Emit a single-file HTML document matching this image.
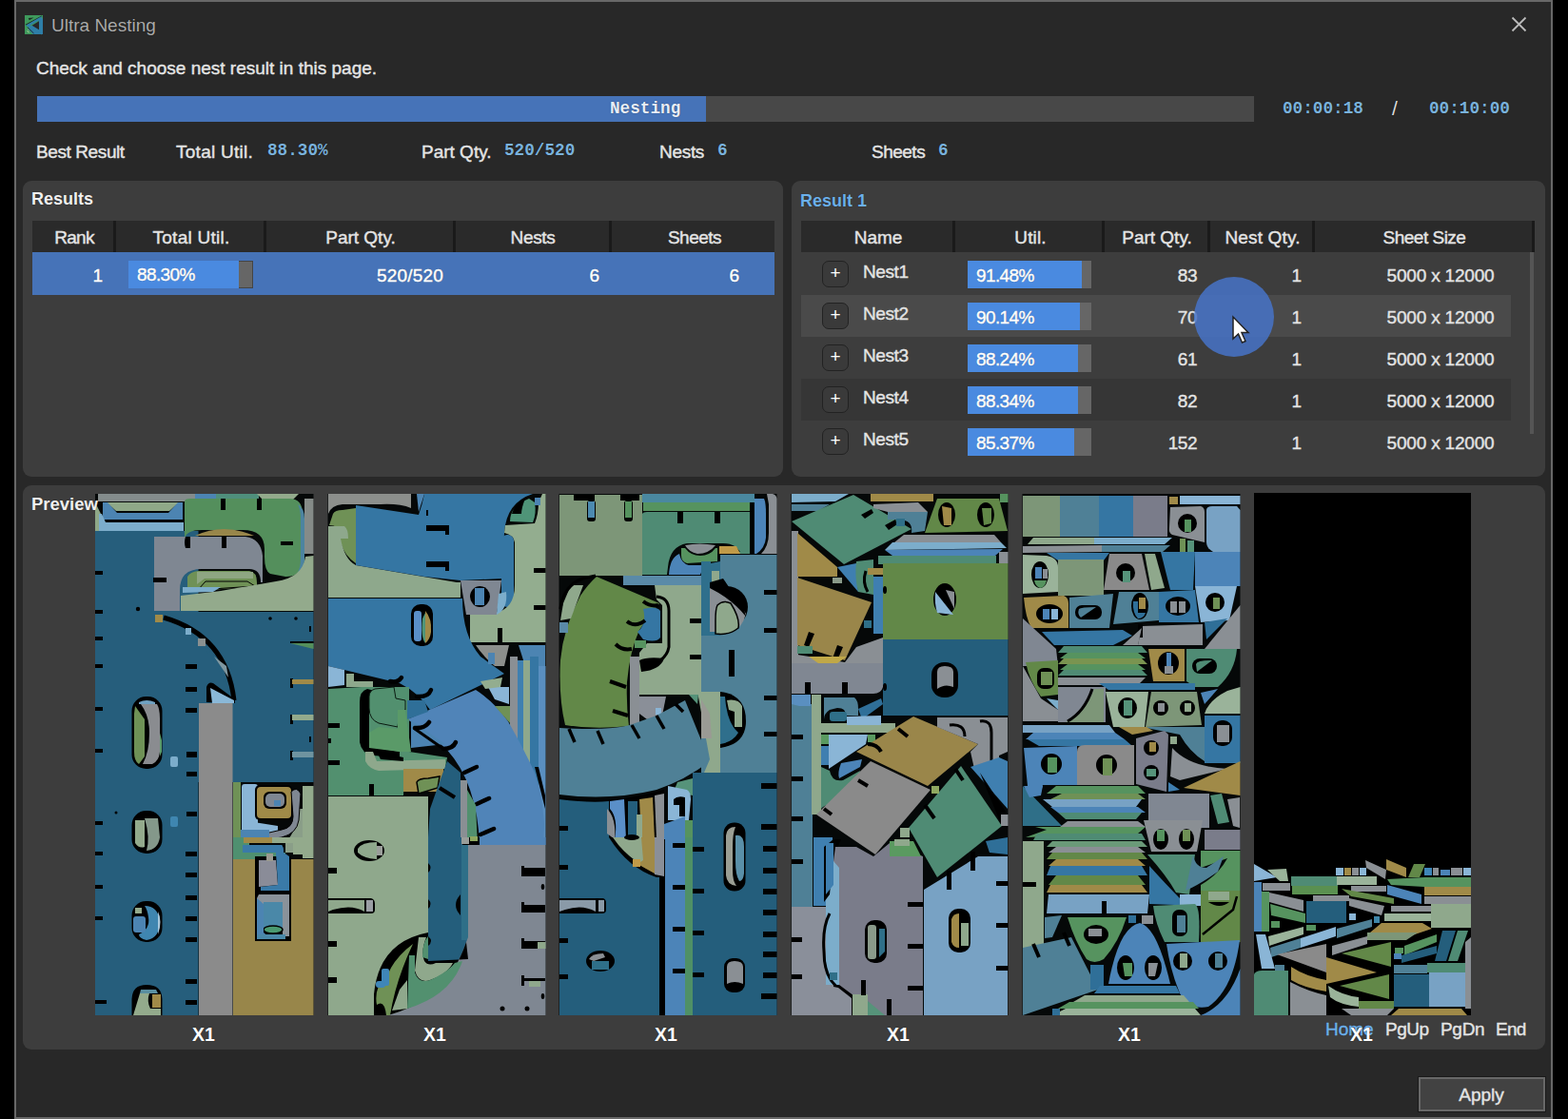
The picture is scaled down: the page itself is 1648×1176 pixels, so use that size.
<!DOCTYPE html>
<html lang="en">
<head>
<meta charset="utf-8">
<title>Ultra Nesting</title>
<style>
*{box-sizing:border-box;margin:0;padding:0}
html,body{width:1648px;height:1176px;overflow:hidden;background:#000}
body{font-family:"Liberation Sans",sans-serif;color:#e6e6e6;font-size:18px;position:relative}
.abs{position:absolute}
#win{position:absolute;left:15px;top:0;width:1617px;height:1176px;background:#282828;border:2.300px solid #686868}
.t{position:absolute;white-space:nowrap;line-height:1;text-shadow:0 0 1px rgba(0,0,0,.6)}
.lbl{color:#e4e4e4;font-size:19px;-webkit-text-stroke:.45px currentColor}
.mono{font-family:"Liberation Mono",monospace;color:#7ab2dc;font-size:17.700px;font-weight:bold}
.panel{position:absolute;background:#3d3d3d;border-radius:9px}
.hdr{position:absolute;background:#2a2a2a}
.hdr .sep{position:absolute;top:0;width:3px;height:100%;background:#1a1a1a}
.c{transform:translateX(-50%)}
.r{transform:translateX(-100%)}
.b{font-weight:bold}
.row{position:absolute;left:842px;width:746px;height:44px}
.plus{position:absolute;left:864px;width:28px;height:28px;border:1.5px solid #222;border-radius:7px;background:#3a3a3a;color:#fff;font-size:19px;line-height:24px;text-align:center}
.bar{position:absolute;left:1017px;height:29px;background:#4a8ae0}
.barbg{position:absolute;left:1017px;width:130px;height:29px;background:#666}
</style>
</head>
<body>
<div id="win"></div>

<!-- title bar -->
<svg class="abs" style="left:26px;top:16px" width="19" height="20.500" viewBox="0 0 20 21" preserveAspectRatio="none">
  <rect x="0" y="0" width="20" height="20.500" fill="#3f9a5c"/>
  <polygon points="20,0 20,20.500 9,20.500 3,14 14,8" fill="#2e7fa8"/>
  <polygon points="16,0 20,0 20,3 4,11.500 0,11.500 0,9.500" fill="#3f9a5c"/>
  <path d="M19,1 L1,10.500" stroke="#1d2a22" stroke-width="1.300" fill="none"/>
  <path d="M4,3 L10,2.500 L5,5.500Z" fill="#1d2a22"/>
  <path d="M17.500,3 L3.500,11 L17.500,19 Z" fill="none" stroke="#2e7fa8" stroke-width="2.400" stroke-linejoin="miter"/>
  <polygon points="15.800,6.500 8,11 15.800,15.500" fill="#282828"/>
  <path d="M3,13 L10,19.500" stroke="#1d2a22" stroke-width="1" fill="none"/>
  <polygon points="0,12.500 0,20.500 8.500,20.500" fill="#3f9a5c"/>
  <path d="M2.500,17 L5,18.500 M3.500,15 L4.500,16" stroke="#cfe0b0" stroke-width=".8"/>
</svg>
<div class="t" style="left:54px;top:17px;font-size:19px;color:#aaa">Ultra Nesting</div>
<svg class="abs" style="left:1588px;top:17px" width="17" height="17" viewBox="0 0 17 17"><path d="M1.5 1.5 L15.5 15.5 M15.5 1.5 L1.5 15.5" stroke="#bbb" stroke-width="1.8" fill="none"/></svg>

<div class="t lbl" style="left:38px;top:62px">Check and choose nest result in this page.</div>

<!-- progress -->
<div class="abs" style="left:39px;top:101px;width:1279px;height:27px;background:#484848"></div>
<div class="abs" style="left:39px;top:101px;width:703px;height:27px;background:#4673b8"></div>
<div class="t mono" style="left:641px;top:106px;color:#e8eef8">Nesting</div>
<div class="t mono" style="left:1348px;top:106px">00:00:18</div>
<div class="t" style="left:1463px;top:103px;color:#ddd;font-size:21px">/</div>
<div class="t mono" style="left:1502px;top:106px">00:10:00</div>

<!-- best result row -->
<div class="t lbl" style="left:38px;top:150px;letter-spacing:-0.4px">Best Result</div>
<div class="t lbl" style="left:185px;top:150px;letter-spacing:0.26px">Total Util.</div>
<div class="t mono" style="left:281px;top:150px">88.30%</div>
<div class="t lbl" style="left:443px;top:150px">Part Qty.</div>
<div class="t mono" style="left:530px;top:150px">520/520</div>
<div class="t lbl" style="left:693px;top:150px;letter-spacing:-0.3px">Nests</div>
<div class="t mono" style="left:754px;top:150px">6</div>
<div class="t lbl" style="left:916px;top:150px;letter-spacing:-0.5px">Sheets</div>
<div class="t mono" style="left:986px;top:150px">6</div>

<!-- results panel -->
<div class="panel" style="left:24px;top:190px;width:799px;height:311px"></div>
<div class="t b" style="left:33px;top:200px;font-size:18px;color:#f0f0f0">Results</div>
<div class="hdr" style="left:34px;top:232px;width:780px;height:33px">
  <div class="sep" style="left:85px"></div><div class="sep" style="left:243px"></div><div class="sep" style="left:442px"></div><div class="sep" style="left:606px"></div>
</div>
<div class="t lbl c" style="left:78px;top:240px;letter-spacing:-0.7px">Rank</div>
<div class="t lbl c" style="left:201px;top:240px;letter-spacing:0.26px">Total Util.</div>
<div class="t lbl c" style="left:379px;top:240px">Part Qty.</div>
<div class="t lbl c" style="left:560px;top:240px;letter-spacing:-0.3px">Nests</div>
<div class="t lbl c" style="left:730px;top:240px;letter-spacing:-0.5px">Sheets</div>
<div class="abs" style="left:34px;top:265px;width:780px;height:45px;background:#4673b8"></div>
<div class="abs" style="left:135px;top:274px;width:131px;height:29px;background:#666;border:1px solid #444"></div>
<div class="abs" style="left:135px;top:274px;width:116px;height:29px;background:#4a8ae0"></div>
<div class="t lbl r" style="left:108px;top:280px;color:#fff">1</div>
<div class="t lbl" style="left:144px;top:279px;color:#fff;letter-spacing:-0.6px">88.30%</div>
<div class="t lbl r" style="left:466px;top:280px;color:#fff;letter-spacing:0.2px">520/520</div>
<div class="t lbl r" style="left:630px;top:280px;color:#fff">6</div>
<div class="t lbl r" style="left:777px;top:280px;color:#fff">6</div>

<!-- result 1 panel -->
<div class="panel" style="left:832px;top:190px;width:792px;height:311px"></div>
<div class="t b" style="left:841px;top:202px;font-size:18px;color:#6cb0ea">Result 1</div>
<div class="hdr" style="left:842px;top:232px;width:771px;height:33px">
  <div class="sep" style="left:159px"></div><div class="sep" style="left:316px"></div><div class="sep" style="left:427px"></div><div class="sep" style="left:537px"></div><div class="sep" style="left:768px"></div>
</div>
<div class="t lbl c" style="left:923px;top:240px">Name</div>
<div class="t lbl c" style="left:1083px;top:240px;letter-spacing:0.15px">Util.</div>
<div class="t lbl c" style="left:1216px;top:240px">Part Qty.</div>
<div class="t lbl c" style="left:1327px;top:240px;letter-spacing:0.15px">Nest Qty.</div>
<div class="t lbl c" style="left:1497px;top:240px;letter-spacing:-0.5px">Sheet Size</div>
<div id="rows">
<div class="plus" style="top:274px">+</div>
<div class="t lbl" style="left:907px;top:276px;letter-spacing:-0.4px">Nest1</div>
<div class="barbg" style="top:274px"></div><div class="bar" style="top:274px;width:120px"></div>
<div class="t lbl" style="left:1026px;top:280px;color:#fff;letter-spacing:-0.6px">91.48%</div>
<div class="t lbl r" style="left:1258px;top:280px;letter-spacing:-0.5px">83</div>
<div class="t lbl r" style="left:1368px;top:280px">1</div>
<div class="t lbl c" style="left:1514px;top:280px;letter-spacing:-0.2px">5000 x 12000</div>
<div class="row" style="top:309.500px;background:#4a4a4a"></div>
<div class="plus" style="top:318px">+</div>
<div class="t lbl" style="left:907px;top:320px;letter-spacing:-0.4px">Nest2</div>
<div class="barbg" style="top:318px"></div><div class="bar" style="top:318px;width:118px"></div>
<div class="t lbl" style="left:1026px;top:324px;color:#fff;letter-spacing:-0.6px">90.14%</div>
<div class="t lbl r" style="left:1258px;top:324px;letter-spacing:-0.5px">70</div>
<div class="t lbl r" style="left:1368px;top:324px">1</div>
<div class="t lbl c" style="left:1514px;top:324px;letter-spacing:-0.2px">5000 x 12000</div>
<div class="plus" style="top:362px">+</div>
<div class="t lbl" style="left:907px;top:364px;letter-spacing:-0.4px">Nest3</div>
<div class="barbg" style="top:362px"></div><div class="bar" style="top:362px;width:116px"></div>
<div class="t lbl" style="left:1026px;top:368px;color:#fff;letter-spacing:-0.6px">88.24%</div>
<div class="t lbl r" style="left:1258px;top:368px;letter-spacing:-0.5px">61</div>
<div class="t lbl r" style="left:1368px;top:368px">1</div>
<div class="t lbl c" style="left:1514px;top:368px;letter-spacing:-0.2px">5000 x 12000</div>
<div class="row" style="top:397.500px;background:#363636"></div>
<div class="plus" style="top:406px">+</div>
<div class="t lbl" style="left:907px;top:408px;letter-spacing:-0.4px">Nest4</div>
<div class="barbg" style="top:406px"></div><div class="bar" style="top:406px;width:116px"></div>
<div class="t lbl" style="left:1026px;top:412px;color:#fff;letter-spacing:-0.6px">88.34%</div>
<div class="t lbl r" style="left:1258px;top:412px;letter-spacing:-0.5px">82</div>
<div class="t lbl r" style="left:1368px;top:412px">1</div>
<div class="t lbl c" style="left:1514px;top:412px;letter-spacing:-0.2px">5000 x 12000</div>
<div class="plus" style="top:450px">+</div>
<div class="t lbl" style="left:907px;top:452px;letter-spacing:-0.4px">Nest5</div>
<div class="barbg" style="top:450px"></div><div class="bar" style="top:450px;width:112px"></div>
<div class="t lbl" style="left:1026px;top:456px;color:#fff;letter-spacing:-0.6px">85.37%</div>
<div class="t lbl r" style="left:1258px;top:456px;letter-spacing:-0.5px">152</div>
<div class="t lbl r" style="left:1368px;top:456px">1</div>
<div class="t lbl c" style="left:1514px;top:456px;letter-spacing:-0.2px">5000 x 12000</div>
<div class="abs" style="left:1608px;top:265px;width:4px;height:191px;background:#555"></div>
<div class="abs" style="left:1255px;top:291px;width:84px;height:84px;border-radius:50%;background:rgba(70,115,200,.85)"></div>
<svg class="abs" style="left:1294px;top:331px" width="22" height="32" viewBox="0 0 22 32"><path d="M2 2 L2 25 L7.5 20 L11.5 29 L15 27.5 L11 18.5 L18 18.5 Z" fill="#fff" stroke="#222" stroke-width="1.5"/></svg>
</div>

<!-- preview panel -->
<div class="panel" style="left:24px;top:509.500px;width:1600px;height:593px"></div>
<svg class="abs" style="left:0;top:0" width="1648" height="1176" viewBox="0 0 1648 1176" shape-rendering="geometricPrecision">
<!--S1-->
<g id="s1">
<rect x="100" y="519" width="229.500" height="548" fill="#050808"/>
<rect x="100" y="558" width="108.500" height="509" fill="#265e7c"/>
<rect x="161" y="643" width="168.500" height="179" fill="#265e7c"/>
<!-- top-left stacked bands -->
<rect x="103" y="519" width="113" height="8" fill="#848c8c"/>
<polygon points="100,528 106,540 106,558 100,558" fill="#8fa888"/>
<polygon points="112,528 188,528 178,537 122,537" fill="#8fa888"/>
<polygon points="108,528 113,528 123,539 177,539 187,528 192,528 192,546 108,546" fill="#4c84b2"/>
<polygon points="104,540 107,540 111,549 193,549 193,558 104,558" fill="#7cadcb"/>
<!-- top strip above green -->
<rect x="205" y="519" width="22" height="5" fill="#4c84b2"/>
<rect x="227" y="519" width="45" height="5" fill="#4f8f7c"/>
<polygon points="270,519 314,519 308,525 276,525" fill="#93aa8c"/>
<!-- green arch -->
<path d="M194,527 Q194,524 200,524 L304,524 Q318,524 318,540 L318,590 Q318,606 300,606 L284,603 Q278,600 278,585 L278,577 Q278,557 255,557 L212,557 Q196,557 194,566 Z" fill="#548f5c"/>
<path d="M313,530 Q320,534 320,545 L320,590 Q319,600 312,604 Q316,596 316,588 L316,545 Q316,536 313,530Z" fill="#4c84a0"/>
<rect x="232" y="524" width="5" height="12" fill="#000"/><rect x="270" y="524" width="5" height="12" fill="#000"/><rect x="295" y="569" width="13" height="4" fill="#000"/>
<rect x="320" y="524" width="9.500" height="58" fill="#858b88"/>
<!-- gold arc + grey-blue arch -->
<path d="M205,563 Q235,549 267,563 Z" fill="#98864a"/>
<path d="M162,564 L258,564 Q274,566 276,584 L276,612 L274,612 Q274,598 262,598 L212,598 Q189,598 189,620 L189,642 L162,642 Z" fill="#7f8792"/>
<path d="M195,564 L200,564 L200,576 L195,576 Q193,570 195,564Z" fill="#000"/><rect x="233" y="564" width="5" height="12" fill="#000"/><rect x="161" y="607" width="14" height="5" fill="#000"/>
<!-- inside arch -->
<path d="M197,620 L197,606 Q200,601 208,600 L262,600 Q270,601 270,612 L270,616 L197,622Z" fill="#6f9156"/>
<path d="M207,601 L266,601 L266,608 L258,608 L215,608 L207,614Z" fill="#8ea682"/>
<polygon points="208,620 216,611 260,611 268,616" fill="#6f9156" stroke="#000" stroke-width="1"/>
<polygon points="192,617 232,617 224,622 192,623" fill="#7cadcb"/>
<!-- sage big -->
<path d="M190,642 L190,626 L232,621 L290,611 Q318,607 321,585 L329.500,584 L329.500,642 Z" fill="#93aa8c"/>
<!-- arc detail -->
<rect x="163" y="646" width="8" height="8" fill="#a08a48"/>
<path d="M172,649 Q238,668 246,736" stroke="#000" stroke-width="5" fill="none"/>
<path d="M196,664 Q226,684 236,716" stroke="#265e7c" stroke-width="3" fill="none" stroke-dasharray="6 7"/>
<rect x="195" y="660" width="6" height="7" fill="#7cadcb"/><rect x="208" y="671" width="8" height="8" fill="#8a9090"/>
<polygon points="225,690 238,700 240,712" fill="#7f97a0"/>
<path d="M217,738 L217,722 Q219,716 224,718 L247,735 L247,739Z" fill="#000"/>
<polygon points="221,723 246,736 246,739 223,739" fill="#8ab8d8"/>
<!-- edge notches -->
<g fill="#000">
<rect x="100" y="600" width="8" height="4"/><rect x="100" y="641" width="8" height="4"/><rect x="100" y="669" width="8" height="4"/><rect x="100" y="698" width="8" height="4"/><rect x="100" y="743" width="8" height="4"/><rect x="100" y="787" width="8" height="4"/><rect x="100" y="863" width="8" height="4"/><rect x="100" y="895" width="8" height="4"/><rect x="100" y="930" width="8" height="4"/><rect x="100" y="963" width="8" height="4"/><rect x="100" y="1051" width="12" height="4"/>
<rect x="195" y="698" width="12" height="5"/><rect x="195" y="722" width="12" height="5"/><rect x="195" y="744" width="12" height="5"/><rect x="196" y="790" width="11" height="6"/><rect x="196" y="811" width="11" height="5"/><rect x="196" y="853" width="11" height="5"/><rect x="195" y="895" width="12" height="5"/><rect x="195" y="917" width="12" height="5"/><rect x="195" y="941" width="12" height="5"/><rect x="195" y="963" width="12" height="5"/><rect x="195" y="985" width="12" height="5"/><rect x="195" y="1029" width="12" height="5"/><rect x="195" y="1051" width="12" height="5"/>
<circle cx="145" cy="640" r="2.200"/><circle cx="284" cy="650" r="1.800"/><circle cx="311" cy="650" r="1.800"/><rect x="325" y="658" width="2" height="6"/><rect x="325" y="774" width="2" height="6"/><circle cx="122" cy="854" r="1.500"/>
</g>
<!-- slots -->
<rect x="138.500" y="732" width="32" height="76" rx="15" fill="#000"/>
<path d="M142,742 L152,756 L152,795 L146,803 Q141,800 141,790 L141,750Z" fill="#6f9156"/>
<path d="M148,740 L165,740 Q168,745 168,755 L168,790 Q167,800 160,803 L150,803 Q157,790 157,770 Q157,752 148,740Z" fill="#8a8c90"/>
<path d="M146,738 Q154,734 163,738 L163,740 L146,740Z" fill="#6fa0c0"/>
<path d="M168,770 L170,778 L170,790 L168,795Z" fill="#5a9a6a"/>
<rect x="179" y="795" width="8" height="11" rx="2" fill="#7cadcb"/>
<rect x="138.500" y="852" width="32" height="45" rx="15" fill="#000"/>
<path d="M142,862 L152,862 L152,890 Q146,892 142,886Z" fill="#93aa8c"/>
<path d="M152,860 L166,860 L168,880 Q166,893 154,894 Q158,880 152,860Z" fill="#84988a"/>
<rect x="179" y="858" width="8" height="11" rx="2" fill="#3f86b0"/>
<rect x="138.500" y="947" width="32" height="43" rx="15" fill="#000"/>
<path d="M152,952 Q166,952 168,968 Q168,986 154,988 Q146,986 146,982 Q158,976 156,964 Q155,956 152,952Z" fill="#3f86b0"/>
<path d="M166,958 Q171,968 166,982Z" fill="#a8c8dc"/>
<rect x="142" y="954" width="7" height="6" fill="#93aa8c"/><rect x="140" y="963" width="13" height="17" rx="3" fill="#4c84b2"/>
<path d="M138.500,1067 L138.500,1050 Q139,1035 154,1035 Q170,1035 170.500,1050 L170.500,1067Z" fill="#000"/>
<path d="M140,1067 L147,1044 L157,1044 Q154,1052 158,1060 L169,1060 L169,1067Z" fill="#93aa8c"/>
<path d="M148,1040 L164,1040 L166,1044 L147,1044Z" fill="#5a8fa0"/>
<rect x="160" y="1045" width="9" height="14" fill="#a08a48"/>
<!-- grey tall -->
<rect x="209" y="739" width="35.500" height="328" fill="#8b8b8b"/>
<!-- right colored bars -->
<rect x="305" y="713" width="3" height="10" fill="#000"/><rect x="307" y="714" width="22.500" height="5" fill="#a08a48"/>
<rect x="305" y="751" width="3" height="10" fill="#000"/><rect x="307" y="751" width="22.500" height="6" fill="#93aa8c"/>
<rect x="305" y="789" width="3" height="10" fill="#000"/><rect x="307" y="790" width="22.500" height="6" fill="#6f94a0"/>
<polygon points="305,676 329.500,682 329.500,676" fill="#548f5c"/><rect x="305" y="674" width="24.500" height="2" fill="#000"/>
<!-- lower right mix -->
<rect x="245" y="822" width="8" height="80" fill="#6f9156"/>
<rect x="254" y="824" width="17" height="48" rx="3" fill="#8ab5d6"/>
<rect x="268" y="825" width="39" height="37" rx="5" fill="#000"/>
<rect x="270" y="827" width="36" height="33" rx="4" fill="#a08a48"/>
<rect x="277" y="832" width="24" height="18" rx="6" fill="#000"/><rect x="279" y="834" width="20" height="14" rx="5" fill="#7f8792"/><rect x="288" y="841" width="7" height="6" fill="#4c84b2"/>
<rect x="318" y="826" width="11.500" height="76" fill="#93aa8c"/><path d="M312,850 L318,850 L318,896 L300,896 L300,884 Q312,876 312,850Z" fill="#8a9e88"/>
<path d="M254,862 L292,868 L292,878 L254,878Z" fill="#8ab5d6"/>
<path d="M306,832 Q312,826 316,834 L314,862 Q312,876 296,880 L270,884 L270,878 L296,872 Q308,870 308,858Z" fill="#7f8792" stroke="#000" stroke-width="1"/>
<rect x="253" y="872" width="30" height="12" fill="#4c84b2"/>
<path d="M245,880 L262,880 L262,896 L300,896 L300,903 L245,903Z" fill="#4f9070"/>
<path d="M255,888 L296,888 Q298,890 298,896 L296,930 L290,930 L290,896 L255,896Z" fill="#3a7aa8"/>
<rect x="256" y="880" width="30" height="6" fill="#a08a48"/>
<path d="M286,880 L318,880 L318,898 L308,898 L308,886 L286,886Z" fill="#93aa8c"/>
<!-- gold block -->
<rect x="245" y="903" width="84.500" height="164" fill="#98864a"/>
<rect x="268" y="900" width="38" height="89" fill="#000"/>
<path d="M272,904 L290,904 L292,930 L272,932Z" fill="#8a8c98"/>
<rect x="280" y="897" width="7" height="8" fill="#9a9a90"/>
<path d="M256,888 L296,888 Q298,890 298,896 L304,900 L304,936 L274,936 L274,932 L292,930 L290,896 L256,896Z" fill="#3a7aa8"/>
<path d="M272,940 L304,940 L304,984 L297,984 L297,950 L277,950 L277,984 L270,984 L270,944Z" fill="#8a929a"/>
<rect x="277" y="948" width="20" height="30" fill="#4a88a8"/>
<ellipse cx="287" cy="977" rx="10" ry="4" fill="#4a9a70" stroke="#000" stroke-width="1.500"/>
<path d="M270,944 L277,950 L277,980 L284,986 L270,986Z" fill="#4c84b2"/>
<rect x="270" y="982" width="30" height="5" fill="#4a88a8"/>
</g>
<!--/S1--><!--S2-->
<g id="s2">
<rect x="344.500" y="519" width="229" height="548" fill="#050808"/>
<!-- top-left -->
<path d="M345,519 L432,519 L432,534 Q420,529 400,530 L360,530 Q348,531 345,540Z" fill="#8c8f8c"/>
<path d="M350,540 Q352,536 360,536 L374,534 L374,592 Q362,584 358,570 L358,560 Q356,552 346,552Z" fill="#6f9156"/>
<path d="M345,556 Q356,556 358,566 Q362,588 374,594 L480,612 L484,612 L484,628 L345,628Z" fill="#8ea88c"/>
<path d="M345,553 L362,553 Q366,556 366,566 L345,566Z" fill="#8ea88c"/>
<!-- blue upper -->
<path d="M374,531 L440,541 Q444,530 446,519 L560,519 Q532,528 530,560 L528,608 L484,610 L446,606 L374,594Z" fill="#3576a3"/>
<polygon points="438,519 446,519 440,538" fill="#4c84b2"/>
<rect x="527" y="562" width="13" height="76" rx="6" fill="#3576a3"/>
<g fill="#000"><rect x="448" y="552" width="24" height="6"/><rect x="468" y="552" width="4" height="10"/><rect x="448" y="590" width="24" height="6"/><rect x="468" y="590" width="4" height="10"/><rect x="448" y="536" width="2" height="6"/></g>
<!-- right sage -->
<path d="M573.500,519 L573.500,675 L494,675 L494,646 L520,644 Q541,640 541,615 L541,570 Q540,562 530,560 L531,552 L562,550 Q566,540 566,528 L570,519Z" fill="#93ad8f"/>
<path d="M536,548 Q536,532 556,524 L562,528 Q564,540 560,549Z" fill="#4f9478"/>
<path d="M538,540 Q540,530 552,524 Q548,534 548,540Z" fill="#000"/>
<rect x="562" y="523" width="6" height="8" fill="#4c84b2"/>
<g fill="#000"><rect x="561" y="597" width="12.500" height="5"/><rect x="561" y="636" width="12.500" height="5"/><rect x="523" y="660" width="5" height="15"/></g>
<!-- trapezoid -->
<polygon points="484,610 527,610 522,646 490,646" fill="#7f8792"/>
<ellipse cx="504.500" cy="627" rx="10.500" ry="11" fill="#000"/><rect x="499" y="618" width="10" height="18" fill="#4c84b2"/>
<path d="M524,624 L532,622 Q534,640 522,646Z" fill="#7cadcb"/>
<!-- blue lower + band -->
<path d="M345,629 L486,629 Q486,668 505,690 L530,708 L452,746 Q440,728 420,718 L345,700Z" fill="#3576a3"/>
<rect x="432" y="635" width="23" height="44" rx="10" fill="#000"/>
<rect x="435" y="642" width="8" height="32" rx="3" fill="#5a8fc8"/><path d="M447,642 Q454,650 453,664 Q452,672 447,676Z" fill="#a08a48"/><path d="M444,650 L447,644 L447,676 Q442,670 444,650Z" fill="#4f9478"/>
<!-- bottom-right small of top area -->
<path d="M500,678 L535,678 L530,700 L520,700 Q508,690 500,678Z" fill="#8c8f8c"/>
<path d="M545,678 L573,678 L573,700 L552,700Z" fill="#4c84b2"/>
<rect x="513" y="686" width="7" height="12" fill="#4c84b2"/>
<!-- right stripes -->
<rect x="536" y="690" width="8" height="110" fill="#8a8f94"/><rect x="544" y="694" width="6" height="120" fill="#3f80b0"/><rect x="550" y="694" width="7" height="130" fill="#8ea88c"/><rect x="557" y="690" width="9" height="160" fill="#3576a3"/><rect x="566" y="700" width="7.500" height="188" fill="#5a8fc0"/>
<path d="M562,806 L566,806 L573,836 L573,850Z" fill="#000"/>
<path d="M428,756 L500,725 Q520,738 534,758 Q552,790 562,812 Q570,835 572,866 L571,888 L504,888 Q503,856 494,830 Q486,806 469,787 Q450,770 428,756 Z" fill="#5084b8"/>
<path d="M513,722 L535,722 L535,740 L520,735Z" fill="#8ab5d6"/><path d="M505,716 L528,712 L526,722 L510,724Z" fill="#93ad8f"/>
<path d="M520,742 L536,742 L536,760Z" fill="#6f9156"/>
<!-- left green block -->
<path d="M345,724 L380,722 L430,722 L430,790 L470,796 L468,808 L425,812 L424,836 L345,836Z" fill="#52906f"/>
<path d="M345,700 L362,704 L362,720 L345,722Z" fill="#8ab5d6"/><path d="M364,708 L372,708 L372,716 L392,716 L392,722 L364,722Z" fill="#8ea88c"/>
<path d="M386,724 Q378,726 378,738 L378,780 Q380,792 392,794 L420,796 L420,790 L396,786 Q388,784 388,770 L388,735 Q388,728 394,726Z" fill="#000"/>
<path d="M394,724 L414,722 L416,734 L426,736 L426,746 L420,748 L418,764 L398,760 Q388,756 388,744 L388,732 Q388,726 394,724Z" fill="#52906f" stroke="#0a1a10" stroke-width="1"/>
<path d="M418,746 L426,746 L432,790 L420,790 L388,786 L388,770 L398,764 L418,766Z" fill="#5a9a68"/>
<path d="M384,790 L392,790 L396,800 L468,798 L468,808 L398,810 Q388,808 384,800Z" fill="#8ea88c"/>
<path d="M396,790 L424,796 L424,800 L400,798Z" fill="#000"/>
<rect x="424" y="808" width="42" height="24" fill="#a08a48"/>
<path d="M438,822 Q440,818 450,818 L462,816 L460,828 L440,834Z" fill="#6f9156" stroke="#000" stroke-width="1.500"/>
<path d="M428,736 L446,736 L450,748 L428,756Z" fill="#2f6f98"/>
<path d="M432,757 L468,782 L432,786Z" fill="#4c84b2"/>
<g fill="#000"><rect x="345" y="760" width="12" height="5"/><rect x="345" y="799" width="12" height="5"/><rect x="388" y="824" width="5" height="13"/><rect x="345" y="776" width="3" height="5"/></g>
<!-- hooks -->
<g stroke="#000" stroke-width="4.500" fill="none" stroke-linecap="round">
<path d="M410,716 Q418,718 422,712"/><path d="M453,725 Q450,733 438,732"/><path d="M451,759 Q446,766 436,765"/><path d="M479,780 Q476,787 466,787"/><path d="M501,806 L488,812"/><path d="M514,839 L501,845"/><path d="M519,871 L505,877"/>
<path d="M436,766 L466,787" stroke-width="3"/>
</g>
<!-- teal mid pieces -->
<path d="M470,800 L484,812 L484,880 L450,880 L452,850 L464,816Z" fill="#245e7c"/>
<path d="M462,828 L478,838" stroke="#000" stroke-width="4"/>
<rect x="484" y="820" width="7" height="70" fill="#8a8f94"/><path d="M491,830 L500,846 L502,890 L491,890Z" fill="#52906f"/>
<!-- sage lower-left -->
<rect x="345" y="837" width="105" height="230" fill="#8fa88c"/>
<rect x="450" y="880" width="42" height="130" fill="#245e7c"/>
<rect x="485" y="888" width="7" height="100" fill="#2f6f88"/>
<path d="M492,888 L573.500,888 L573.500,1067 L408,1067 Q470,1050 490,990 L492,985Z" fill="#7f8792"/>
<rect x="505" y="880" width="68.500" height="8" fill="#5084b8"/>
<rect x="486" y="880" width="18" height="8" fill="#000"/><rect x="485" y="880" width="8" height="7" fill="#9a9e9a"/><rect x="494" y="879" width="8" height="5" fill="#8fa860"/>
<!-- lens -->
<path d="M450,980 Q398,990 393,1045 L393,1067 L408,1067 Q470,1050 490,990 L492,1008 L450,1010Z" fill="#000"/>
<path d="M434,992 Q410,1010 404,1034 L398,1036 Q394,1046 396,1056 Q404,1050 406,1067 L410,1067 Q416,1030 434,992Z" fill="#6f9156"/>
<path d="M440,985 L448,985 Q442,1000 446,1010 Q450,1016 458,1012 L476,1012 Q470,1024 452,1030 Q440,1034 436,1020Z" fill="#8fa88c"/>
<path d="M430,1004 L436,1004 L436,1022 Q440,1034 452,1030 Q470,1022 478,1012 L486,1010 Q474,1046 428,1060Z" fill="#52906f"/>
<path d="M420,1040 L428,1030 L428,1060 L412,1062Z" fill="#8fa88c"/>
<rect x="401" y="1018" width="8" height="18" rx="2" fill="#3f86b8"/><rect x="395" y="1031" width="10" height="7" rx="3" fill="#3f86b8"/>
<path d="M444,1006 Q444,990 450,984 L450,1008Z" fill="#52906f"/>
<!-- notches & slots lower -->
<g fill="#000">
<rect x="345" y="912" width="9" height="6"/><rect x="345" y="989" width="9" height="6"/><rect x="345" y="1027" width="9" height="6"/>
<path d="M548,910 L551,910 L551,912 L573,912 L573,921 L548,921Z"/><path d="M548,948 L551,948 L551,951 L573,951 L573,959 L548,959Z"/><path d="M548,986 L551,986 L551,989 L573,989 L573,997 L548,997Z"/><path d="M548,1025 L551,1025 L551,1028 L573,1028 L573,1031 L551,1031 L551,1036 L548,1036Z"/>
<circle cx="528" cy="1060" r="2.500"/><circle cx="554" cy="1060" r="2.500"/><ellipse cx="570.500" cy="932" rx="1.800" ry="3"/><ellipse cx="570.500" cy="1047" rx="1.800" ry="3"/>
<path d="M450,907 Q455,912 450,917Z"/><path d="M450,945 Q455,950 450,955Z"/><path d="M450,984 Q456,989 450,994Z"/><path d="M484,940 Q474,951 484,962Z"/>
<ellipse cx="388" cy="894" rx="16" ry="11"/><path d="M345,944 L390,944 Q394,945 394,950 L394,956 Q394,960 390,960 L345,960Z"/>
</g>
<path d="M376,892 Q380,885 396,885 L396,903 Q382,902 376,896Z" fill="#8fa88c"/><rect x="396" y="889" width="6" height="10" fill="#9a9e9a"/>
<path d="M345,946 L383,946 L383,958 Q370,950 350,956 L345,958Z" fill="#8fa88c"/><rect x="385" y="946" width="7" height="12" fill="#9a9ea4"/>
<rect x="565" y="990" width="8.500" height="7" fill="#8fa88c"/><rect x="556" y="1031" width="12" height="6" fill="#8fa88c"/>
</g>
<!--/S2--><!--S3-->
<g id="s3">
<rect x="587.500" y="519" width="229" height="548" fill="#050808"/>
<!-- top-left sage-grey block -->
<rect x="588" y="520" width="87" height="85" fill="#7d9678"/>
<g fill="#000"><rect x="603" y="520" width="22" height="6"/><rect x="652" y="520" width="20" height="6"/><rect x="617" y="526" width="9" height="22" rx="3"/><rect x="656" y="526" width="9" height="22" rx="3"/></g>
<rect x="618" y="527" width="7" height="17" fill="#4c8ab0"/><rect x="657" y="527" width="7" height="17" fill="#56935f"/>
<!-- arch -->
<rect x="675" y="519" width="118" height="9" fill="#4a88a0"/>
<rect x="676" y="528" width="115" height="9" fill="#56935f"/>
<path d="M675,540 Q676,538 680,538 L790,538 L790,582 L757,582 L757,580 Q770,578 778,580 Q772,571 760,571 L722,571 Q704,574 702,596 L701,604 L675,604Z" fill="#4f8b74"/>
<g fill="#000"><rect x="712" y="538" width="6" height="12"/><rect x="751" y="538" width="6" height="12"/><rect x="788" y="528" width="4" height="54"/></g>
<path d="M793,524 L803,524 Q805,528 805,540 L805,565 Q804,576 795,582 L793,582Z" fill="#4c84b8"/>
<path d="M806,519 L812,519 Q816,520 816.500,524 L816.500,582 L800,582 Q808,574 808,560 L808,530Z" fill="#8a8f94"/>
<!-- inside arch -->
<path d="M720,573 Q735,570 752,573 Q745,582 733,582 Q724,580 720,573Z" fill="#8a8f94"/>
<path d="M716,576 L720,576 Q726,584 736,584 Q746,584 752,576 L754,576 L754,590 L722,592 Q716,590 716,584Z" fill="#56935f"/>
<path d="M756,574 L774,574 L778,582 L756,582Z" fill="#c09a48"/>
<path d="M703,604 Q704,586 714,582 Q716,592 724,594 L740,594 L736,604Z" fill="#4c84b8"/>
<!-- right grey-teal block -->
<rect x="757" y="583" width="59.500" height="229" fill="#4f8096"/>
<rect x="737" y="590" width="10" height="80" fill="#2f6f8c"/>
<path d="M737,594 L757,590 L757,670 L737,670Z" fill="#2f6f8c"/>
<rect x="737" y="668" width="22" height="150" fill="#4f8096"/>
<rect x="655" y="605" width="82" height="10" fill="#5a8aa8"/>
<polygon points="688,615 737,615 737,730 672,730 672,686 680,676 696,676 696,636 690,630" fill="#8fa88c"/>
<rect x="672" y="690" width="65" height="40" fill="#8fa88c"/>
<path d="M748,600 L756,600 L756,612 L748,614Z" fill="#8fa88c"/>
<!-- circle hole -->
<circle cx="764" cy="638" r="22" fill="#000"/>
<path d="M746,618 L756,610 Q775,630 784,645 Q780,660 770,664 L746,664Z" fill="#8a8f94"/>
<path d="M746,612 L760,608 L782,640 L784,648 Q770,630 746,618Z" fill="#000"/>
<path d="M754,636 Q760,630 768,634 Q778,650 776,660 Q766,668 752,666 L752,652Q752,640 754,636Z" fill="#8fa88c" stroke="#000" stroke-width="1.500"/>
<rect x="737" y="600" width="9" height="66" fill="#2f6f8c"/>
<!-- olive sector -->
<path d="M627,606 L693,634 Q680,650 672,662 Q662,684 659,717 Q658,740 661,763 Q625,767 594,762 Q587,733 589,694 Q592,660 610,626 Q618,614 627,606 Z" fill="#628848"/>
<polygon points="600,615 613,615 600,650 589,652 592,634" fill="#8fa88c"/>
<path d="M589,640 Q592,616 612,608 L626,605" stroke="#000" stroke-width="3" fill="none"/>
<rect x="588" y="654" width="9" height="11" fill="#5a8aa8"/>
<path d="M676,640 Q690,636 694,642 L694,670 Q690,676 676,672 L670,664 Q680,656 676,640Z" fill="#3576a3"/>
<rect x="667" y="673" width="12" height="8" fill="#56935f"/>
<g stroke="#000" stroke-width="4" fill="none"><path d="M676,632 Q684,638 692,636"/><path d="M659,653 Q668,660 678,652"/><path d="M647,677 Q654,684 664,682"/><path d="M641,716 L658,722"/><path d="M644,747 L660,752"/></g>
<path d="M690,627 Q703,628 703,642 L703,680 Q700,697 674,701" stroke="#000" stroke-width="3" fill="none"/>
<path d="M662,690 L672,690 L672,760 L662,762Z" fill="#8a8f94"/>
<path d="M672,694 Q680,690 698,692 Q694,704 674,706Z" fill="#000"/>
<g fill="#000"><rect x="725" y="650" width="12" height="5"/><rect x="725" y="688" width="12" height="5"/><rect x="803" y="620" width="13.500" height="5"/><rect x="803" y="660" width="13.500" height="5"/><rect x="766" y="683" width="6" height="28"/><rect x="803" y="731" width="13.500" height="5"/><rect x="803" y="769" width="13.500" height="5"/></g>
<!-- small stuff under sage -->
<path d="M672,732 L700,732 L696,752 L680,756 L672,750Z" fill="#8a8f98"/>
<rect x="689" y="744" width="6" height="7" fill="#8ab5d6"/>
<!-- big arc band -->
<path d="M588,765 Q640,768 662,762 L690,752 L720,736 L746,800 Q720,820 690,830 Q640,842 588,835Z" fill="#4f8096"/>
<g stroke="#000" stroke-width="3.500" fill="none"><path d="M598,766 L604,780"/><path d="M628,768 L634,782"/><path d="M664,762 L672,776"/><path d="M690,752 L698,766"/><path d="M710,740 L718,748"/></g>
<!-- D-hole + sage vertical -->
<path d="M733,727 L757,727 L757,812 L740,812 L746,798Z" fill="#8fa88c"/>
<path d="M737,735 L746,750 L748,776 L737,776Z" fill="#9a9a94"/>
<path d="M724,730 L734,730 L733,740Z" fill="#56937a"/>
<path d="M757,727 Q784,730 784,758 Q784,782 757,786Z" fill="#000"/>
<path d="M757,732 L762,732 Q764,760 776,770 Q770,780 757,782Z" fill="#2f6f8c"/>
<path d="M764,736 Q776,734 780,742 L780,764 L772,764 L772,748 L766,746Z" fill="#8fa88c"/>
<!-- dark teal block -->
<rect x="728" y="812" width="88.500" height="255" fill="#245e7c"/>
<path d="M712,822 L728,818 L728,836 L708,832Z" fill="#56937a"/>
<path d="M702,826 L722,830 Q726,832 726,840 L724,862 L702,862Z" fill="#8ab5d6"/>
<path d="M708,840 Q712,836 720,838 L720,858 L714,858 L714,846 L708,846Z" fill="#000"/>
<path d="M698,866 L720,858 L720,882 L698,882Z" fill="#4c84b8"/>
<rect x="720" y="862" width="8" height="20" fill="#56935f"/>
<!-- bottom-left strip area y 838-882 -->
<path d="M588,838 Q640,846 690,832 L698,830 L698,882 L588,882Z" fill="#000"/>
<path d="M588,840 Q620,844 640,842 L640,882 L588,882Z" fill="#245e7c"/>
<path d="M641,842 L656,840 L658,882 L646,882 Q650,860 641,850Z" fill="#5a8fc8"/>
<path d="M638,850 Q648,860 646,882 L638,876Z" fill="#8a8f94"/>
<rect x="660" y="842" width="10" height="40" fill="#245e7c"/>
<path d="M672,840 L686,838 L688,882 L674,882Z" fill="#a08a48"/><rect x="669" y="856" width="6" height="26" fill="#8fa88c"/>
<path d="M688,836 L698,834 L698,882 L690,882Z" fill="#8a8f94"/>
<!-- bottom zone -->
<rect x="588" y="880" width="105" height="187" fill="#245e7c"/>
<rect x="693" y="920" width="6" height="147" fill="#000"/>
<rect x="699" y="880" width="21" height="187" fill="#4c84b8"/>
<rect x="720" y="880" width="8" height="187" fill="#4f9066"/>
<path d="M640,880 L698,880 L698,922 L690,922 Q660,912 640,880Z" fill="#000"/>
<path d="M644,880 L676,880 L676,910 Q660,900 650,888Z" fill="#8fa88c"/>
<path d="M674,880 L688,880 L688,918 L670,908 L676,904Z" fill="#a08a48"/><rect x="665" y="903" width="8" height="8" fill="#c09a48"/>
<path d="M688,880 L698,880 L698,921 L688,919Z" fill="#8a8f98"/>
<ellipse cx="664" cy="880" rx="8" ry="3" fill="#000"/>
<g fill="#000">
<rect x="802" y="889" width="14.500" height="6"/><rect x="802" y="912" width="14.500" height="6"/><rect x="802" y="934" width="14.500" height="6"/><rect x="802" y="956" width="14.500" height="6"/><rect x="802" y="979" width="14.500" height="6"/><rect x="802" y="1000" width="14.500" height="6"/><rect x="802" y="1022" width="14.500" height="6"/><rect x="800" y="1044" width="16.500" height="6"/>
<rect x="800" y="823" width="16.500" height="6"/><rect x="800" y="866" width="16.500" height="6"/>
<rect x="707" y="886" width="13" height="5"/><rect x="707" y="930" width="13" height="5"/><rect x="707" y="974" width="13" height="5"/><rect x="707" y="1018" width="13" height="5"/>
<rect x="728" y="890" width="12" height="5"/><rect x="728" y="934" width="12" height="5"/><rect x="728" y="978" width="12" height="5"/><rect x="728" y="1022" width="12" height="5"/>
<rect x="588" y="909" width="9" height="5"/><rect x="588" y="986" width="9" height="5"/><rect x="588" y="1024" width="9" height="5"/><rect x="588" y="868" width="9" height="5"/>
<rect x="760.500" y="864.500" width="23" height="72" rx="11"/><rect x="761" y="1007" width="22" height="36" rx="9"/>
<path d="M588,944 L634,944 Q637,945 637,949 L637,956 Q637,960 633,960 L588,960Z"/>
<ellipse cx="631" cy="1010" rx="15" ry="11"/>

</g>
<path d="M763,878 Q764,869 773,869 Q770,876 770,890 L770,915 Q770,926 774,931 Q764,930 763,920Z" fill="#9a9e94"/><path d="M773,878 Q782,876 782,890 L782,918 Q781,926 777,926 Q773,920 773,905Z" fill="#5a8fa8"/>
<path d="M764,1016 Q764,1010 772,1010 Q781,1010 781,1016 L781,1034 Q772,1030 764,1034Z" fill="#8a8f94"/>
<path d="M588,946 L626,946 L626,958 Q612,950 594,956 L588,958Z" fill="#8a9aa8"/><rect x="629" y="946" width="6" height="12" fill="#8a9aa8"/>
<path d="M619,1008 Q622,1002 634,1002 L636,1006 L624,1010Z" fill="#8a8f94"/><rect x="622" y="1010" width="18" height="9" fill="#2f6f88"/>

</g>
<!--/S3--><!--S4-->
<g id="s4">
<rect x="831.500" y="519" width="228" height="548" fill="#050808"/>
<!-- top-left -->
<polygon points="832,519 892,519 878,527 832,528" fill="#7cadcb"/>
<polygon points="832,530 872,530 860,537 832,537" fill="#4f8096"/>
<rect x="832" y="558" width="7" height="140" fill="#8a8f94"/>
<polygon points="838,560 880,596 880,606 838,606" fill="#a08a48"/>
<polygon points="897,520 958,556 887,593 832,548" fill="#4f8b74"/>
<path d="M905,541 L916,535 L918,539 L909,545Z M930,552 L941,546 L943,551 L934,557Z" fill="#000"/>
<polygon points="838,607 916,633 888,694 838,678" fill="#9a864a"/>
<path d="M850,664 L856,666 L850,680 L845,678Z M880,678 L886,680 L880,694 L875,692Z" fill="#000"/>
<rect x="838" y="679" width="16" height="8" fill="#4f8b74"/>
<polygon points="832,698 838,688 888,696 900,680 928,670 928,698" fill="#8a8f94"/>
<!-- top mid -->
<rect x="915" y="519" width="66" height="8" fill="#a08a48"/>
<path d="M918,530 L965,528 L975,538 L933,538 L918,534Z" fill="#8a8f94"/>
<path d="M933,538 L975,538 L972,558 L958,560 Q960,546 944,546 L933,546Z" fill="#4f8096"/>
<rect x="942" y="545" width="9" height="8" fill="#2f6f88"/>
<polygon points="985,524 1050,524 1059,558 972,560" fill="#628848"/>
<rect x="1051" y="519" width="8.500" height="9" fill="#56935f"/>
<ellipse cx="995" cy="541" rx="9" ry="13" fill="#000"/><ellipse cx="1036" cy="541" rx="9" ry="13" fill="#000"/>
<path d="M990,532 L1000,534 L1000,552 L992,552Z" fill="#a08a48"/><path d="M1032,534 L1042,534 L1042,550 L1034,552Z" fill="#628848"/>
<!-- stacked bands -->
<polygon points="950,562 1045,562 1052,570 940,570" fill="#8a8f94"/>
<polygon points="938,570 1052,570 1058,576 930,578" fill="#7cadcb"/>
<polygon points="930,578 1054,577 1046,584 938,584" fill="#4c84b8"/>
<rect x="923" y="584" width="124" height="9" fill="#4f8b74"/>
<rect x="1050" y="580" width="9.500" height="12" fill="#8a8f94"/>
<rect x="928" y="592" width="131.500" height="80" fill="#628848"/>
<rect x="928" y="672" width="131.500" height="80" fill="#245e7c"/>
<ellipse cx="993" cy="630" rx="12" ry="17" fill="#000"/>
<path d="M983,622 L1002,646 L985,644 Q982,634 983,622Z" fill="#8ab5d6"/><path d="M994,620 L1003,622 L1003,640Z" fill="#8a8f94"/>
<!-- between -->
<polygon points="880,596 900,592 902,622" fill="#3f7fb0"/>
<path d="M900,590 L918,588 L918,625 L902,622 Q898,606 900,590Z" fill="#4f8b74"/>
<rect x="912" y="597" width="16" height="7" fill="#a08a48"/>
<rect x="918" y="606" width="10" height="60" fill="#3f7fb0"/>
<rect x="875" y="607" width="10" height="6" fill="#8a9a8a"/>
<path d="M910,600 Q906,612 912,622" stroke="#000" stroke-width="3" fill="none"/>
<rect x="908" y="652" width="8" height="8" fill="#2f6f88"/>
<ellipse cx="930" cy="620" rx="2" ry="4" fill="#000"/>
<!-- grey rect -->
<path d="M832,697 L928,697 L928,722 Q926,729 918,729 L832,729Z" fill="#808792"/>
<g fill="#000"><rect x="846" y="717" width="6" height="12"/><rect x="885" y="717" width="6" height="12"/><ellipse cx="930" cy="722" rx="2" ry="4"/></g>
<path d="M850,690 L890,690 L880,697 L860,697Z" fill="#c0a848"/>
<rect x="979" y="696" width="28" height="37" rx="13" fill="#000"/>
<path d="M985,706 Q985,700 993,700 Q1002,700 1002,706 L1002,722 Q993,718 985,724Z" fill="#8a8f94"/>
<!-- left column -->
<rect x="832" y="740" width="22" height="215" fill="#4f8096"/>
<path d="M832,730 L852,730 L852,742 L840,742 L832,740Z" fill="#5a8fc0"/>
<rect x="853" y="730" width="10" height="126" fill="#8fa88c"/>
<rect x="853" y="760" width="88" height="10" fill="#8fa88c"/>
<path d="M866,733 L898,733 Q902,736 902,745 L902,752 L888,752 Q890,744 880,744 L872,746 Q866,750 866,756Z" fill="#4f8096"/>
<path d="M902,745 L926,734 L928,740 L906,756Z" fill="#2f6f98"/>
<path d="M890,753 L926,752 L926,762 L890,762Z" fill="#8ab5d6"/>
<rect x="872" y="748" width="18" height="10" rx="3" fill="#2f6f88"/>
<rect x="863" y="772" width="8" height="10" fill="#5a9a60"/><rect x="863" y="784" width="8" height="20" fill="#3f7fb0"/>
<polygon points="871,772 912,772 910,782 880,802 871,808" fill="#8ab5d6"/>
<rect x="912" y="772" width="8" height="8" fill="#5a9a60"/>
<path d="M884,802 Q880,812 882,818 L904,806 L906,798Z" fill="#4c84b8"/>
<path d="M863,806 L872,810 Q874,822 886,820 L904,810 L900,830 L865,848 L863,850Z" fill="#4f8b74"/>
<!-- rotated rects -->
<polygon points="960,753 1028,782 975,826 900,790" fill="#9a864a"/>
<polygon points="915,800 978,830 920,898 858,856" fill="#8a8a8a"/>
<polygon points="1010,805 1053,868 985,922 955,870" fill="#4f8b74"/>
<rect x="979" y="826" width="8" height="8" fill="#8fa860"/>
<g stroke="#000" stroke-width="4" fill="none"><path d="M944,766 L954,774"/><path d="M912,782 Q922,782 926,790"/><path d="M902,820 L912,826"/><path d="M866,850 L874,856"/><path d="M1004,808 L1012,820"/><path d="M972,846 L982,860"/></g>
<!-- right top grey U -->
<path d="M985,754 L1059,754 L1059,790 L1050,794 L1050,812 Q1040,822 1024,808 L1020,790 L1028,782 L985,764Z" fill="#8a8f94"/>
<path d="M1030,758 Q1042,756 1042,770 L1042,800 Q1040,810 1030,806" stroke="#000" stroke-width="3" fill="none"/>
<path d="M998,762 Q1014,760 1014,774" stroke="#000" stroke-width="3" fill="none"/>
<polygon points="1020,806 1059,850 1059,800 1050,796" fill="#3f7fb0"/>
<polygon points="1030,812 1059,856 1059,870 1052,866" fill="#000"/>
<rect x="1052" y="856" width="7.500" height="12" fill="#8a8f94"/>
<rect x="946" y="870" width="10" height="10" fill="#8fa88c"/>
<!-- bottom zone -->
<rect x="855" y="880" width="20" height="72" fill="#3f7fb0"/>
<rect x="832" y="953" width="44" height="114" fill="#8a8f9a"/>
<path d="M868,905 L884,905 L884,1035 L868,1035Z" fill="#7cadcb"/>
<path d="M872,960 Q864,975 866,1000 Q866,1030 884,1040" stroke="#000" stroke-width="3" fill="none"/>
<path d="M876,882 L884,882 L876,900 L872,940 L866,948 L866,890Z" fill="#000"/>
<path d="M868,886 L876,886 L876,930 L868,940Z" fill="#3f7fb0"/>
<path d="M882,1035 L925,1067 L882,1067Z" fill="#000"/><polygon points="876,1037 881,1038 895,1049 895,1067 876,1067" fill="#8a8f9a"/>
<path d="M878,890 L900,890 L918,900 L935,886 L970,900 L970,1067 L925,1067 L882,1035 L882,912 L876,905Z" fill="#7a7c8a"/>
<path d="M935,884 L960,884 L968,900 L935,900Z" fill="#5a9a60"/>
<rect x="940" y="882" width="16" height="7" fill="#8fa88c"/>
<path d="M971,935 L1028,900 L1059,900 L1059,1067 L971,1067Z" fill="#78a2c4"/>
<path d="M1036,884 L1059,880 L1059,898 L1040,896Z" fill="#2f6f98"/>
<rect x="896" y="1045" width="16" height="22" fill="#8fa88c"/><path d="M912,1052 L930,1067 L912,1067Z" fill="#56937a"/>
<rect x="872" y="1022" width="8" height="8" fill="#2f6f88"/>
<rect x="909" y="967" width="23" height="45" rx="10" fill="#000"/><rect x="912" y="972" width="9" height="36" rx="3" fill="#8a9a8a"/><path d="M924,976 L930,976 L930,1000 L924,1006Z" fill="#2f6f88"/>
<rect x="997" y="955" width="23" height="46" rx="10" fill="#000"/><path d="M1000,966 Q1002,960 1008,960 L1008,996 Q1002,996 1000,990Z" fill="#a08a48"/><rect x="1010" y="970" width="8" height="24" fill="#8fa88c"/>
<g fill="#000">
<rect x="954" y="948" width="16" height="5"/><rect x="954" y="992" width="16" height="5"/><rect x="954" y="1036" width="16" height="5"/>
<rect x="832" y="903" width="12" height="5"/><rect x="832" y="985" width="11" height="5"/><rect x="832" y="1024" width="11" height="5"/><rect x="832" y="772" width="12" height="5"/><rect x="832" y="816" width="12" height="5"/><rect x="832" y="858" width="12" height="5"/>
<rect x="1047" y="926" width="12.500" height="5"/><rect x="1047" y="970" width="12.500" height="5"/><rect x="1047" y="1015" width="12.500" height="5"/>
<rect x="905" y="1030" width="5" height="16"/><rect x="932" y="1050" width="5" height="17"/><rect x="995" y="915" width="5" height="20"/><rect x="1020" y="895" width="5" height="20"/>
</g>
</g>
<!--/S4--><!--S5-->
<g id="s5">
<rect x="1074.500" y="519" width="229" height="548" fill="#050808"/>
<!-- top row -->
<rect x="1075" y="521" width="39" height="43" fill="#7d9678"/><rect x="1114" y="521" width="41" height="43" fill="#4f8096"/><rect x="1155" y="521" width="36" height="43" fill="#3576a3"/><rect x="1191" y="521" width="36" height="43" fill="#7a7c8a"/>
<rect x="1229" y="522" width="9" height="8" fill="#a08a48"/><rect x="1240" y="521" width="63.500" height="9" fill="#8ab5d6"/>
<path d="M1230,533 L1262,532 Q1266,533 1266,538 L1266,570 L1232,562 Q1228,560 1229,554Z" fill="#8a8f94"/>
<circle cx="1248" cy="550" r="10" fill="#000"/><rect x="1245" y="546" width="7" height="13" fill="#56935f"/>
<path d="M1268,536 Q1268,532 1274,532 L1300,532 L1303.500,536 L1303.500,580 L1275,580 Q1268,576 1268,570Z" fill="#78a2c4"/>
<rect x="1240" y="566" width="6" height="14" fill="#6f9156"/><rect x="1248" y="568" width="7" height="12" fill="#56937a"/>
<!-- bands -->
<polygon points="1086,565 1150,565 1150,572 1080,572" fill="#8fa88c"/><polygon points="1150,565 1232,565 1224,572 1150,572" fill="#7cadcb"/>
<polygon points="1075,574 1158,573 1158,580 1075,581" fill="#8a8f94"/><polygon points="1158,573 1230,573 1222,580 1158,580" fill="#4f8096"/>
<polygon points="1100,581 1166,581 1160,589 1112,589" fill="#3576a3"/>
<!-- second row -->
<path d="M1075,583 L1100,584 Q1112,586 1112,596 L1112,622 L1075,624Z" fill="#9ab39a"/>
<ellipse cx="1093" cy="604" rx="9" ry="14" fill="#000"/><rect x="1088" y="596" width="7" height="12" fill="#4c84b8"/><rect x="1096" y="598" width="5" height="10" fill="#8a8f94"/><path d="M1087,610 L1100,610 Q1098,618 1093,618 Q1088,616 1087,610Z" fill="#56935f"/>
<rect x="1112" y="588" width="48" height="38" fill="#7d9678"/>
<polygon points="1166,582 1200,582 1208,620 1160,620" fill="#8a8a8a"/>
<circle cx="1183" cy="602" r="10" fill="#000"/><rect x="1180" y="600" width="8" height="12" fill="#56937a"/>
<polygon points="1203,582 1214,582 1224,618 1210,620" fill="#8fa88c"/>
<polygon points="1220,580 1256,580 1254,620 1230,620" fill="#3576a3"/>
<rect x="1256" y="580" width="47.500" height="36" fill="#4c84b8"/>
<!-- third row -->
<path d="M1076,628 L1118,626 Q1123,628 1123,634 L1123,660 L1084,660 Q1078,650 1076,628Z" fill="#a08a48"/>
<ellipse cx="1103" cy="645" rx="14" ry="10" fill="#000"/><rect x="1096" y="640" width="7" height="11" fill="#4c84b8"/><rect x="1105" y="640" width="7" height="11" fill="#8ab5d6"/>
<path d="M1124,628 L1170,624 L1166,660 L1124,660Z" fill="#4f8096"/>
<rect x="1130" y="636" width="28" height="15" rx="7" fill="#000"/><path d="M1134,640 Q1136,638 1152,638 L1136,649 Q1132,646 1134,640Z" fill="#4f8096"/>
<path d="M1176,622 L1218,622 L1218,652 L1170,656Z" fill="#4f8096"/>
<ellipse cx="1198" cy="637" rx="9" ry="14" fill="#000"/><rect x="1197" y="628" width="7" height="12" fill="#a08a48"/><path d="M1191,632 L1196,632 L1196,644 L1204,644 Q1202,650 1196,650 Q1190,644 1191,632Z" fill="#2f6f98"/>
<path d="M1218,622 L1256,620 L1260,654 L1218,654Z" fill="#3576a3"/>
<ellipse cx="1238" cy="637" rx="13" ry="10" fill="#000"/><rect x="1230" y="632" width="7" height="12" fill="#8a8f94"/><rect x="1239" y="632" width="7" height="12" fill="#8a8f94"/>
<path d="M1256,616 L1300,616 L1292,652 L1262,654Z" fill="#8ab5d6"/>
<circle cx="1277" cy="633" r="10" fill="#000"/><rect x="1275" y="628" width="7" height="12" fill="#6f9156"/>
<polygon points="1303.500,636 1303.500,682 1266,682" fill="#8a8f94"/>
<path d="M1266,654 L1290,650 L1268,672Z" fill="#2f6f98"/>
<!-- fourth -->
<polygon points="1075,650 1110,682 1112,700 1075,700" fill="#808792"/>
<polygon points="1095,664 1180,662 1190,668 1170,678 1108,678" fill="#3576a3"/>
<path d="M1200,658 L1264,656 L1264,678 L1196,678Z" fill="#8a8f94"/>
<rect x="1196" y="656" width="5" height="14" fill="#000"/>
<polygon points="1180,678 1200,660 1196,678" fill="#8a8f94"/>
<!-- stripes 1 -->
<polygon points="1118,679 1200,679 1206,686 1112,686" fill="#4f8b74"/><polygon points="1122,686 1196,686 1204,692 1114,692" fill="#56935f"/>
<polygon points="1118,692 1200,692 1206,698 1112,698" fill="#7a9450"/><polygon points="1122,698 1196,698 1204,704 1114,704" fill="#56935f"/><polygon points="1118,704 1200,704 1206,710 1112,710" fill="#4f8b74"/><polygon points="1112,712 1204,712 1196,720 1112,720" fill="#8a8f94"/>
<!-- gold + teal-green tiles -->
<path d="M1207,682 L1245,682 L1245,716 L1212,716Z" fill="#a08a48"/>
<ellipse cx="1228" cy="697" rx="11" ry="12" fill="#000"/><rect x="1226" y="686" width="5" height="14" fill="#4c84b8"/><rect x="1224" y="700" width="9" height="8" fill="#8a8f94"/>
<path d="M1247,682 L1300,682 Q1298,706 1280,722 L1256,722 L1247,716Z" fill="#4f8b74"/>
<rect x="1253" y="692" width="26" height="16" rx="8" fill="#000"/><path d="M1257,698 Q1258,694 1274,694 L1258,706Z" fill="#4f8b74"/>
<polygon points="1155,718 1256,718 1256,725 1165,725" fill="#3576a3"/>
<!-- olive tile left -->
<path d="M1078,696 L1112,694 L1112,730 L1094,732 Q1082,716 1078,696Z" fill="#628848"/>
<rect x="1090" y="702" width="18" height="22" rx="7" fill="#000"/><rect x="1094" y="706" width="12" height="14" fill="#6f9156"/>
<polygon points="1075,700 1094,734 1112,746 1112,758 1075,758" fill="#8a8f94"/>
<path d="M1100,734 L1112,736 L1112,746Z" fill="#7cadcb"/>
<rect x="1112" y="722" width="50" height="37" fill="#808792"/>
<path d="M1150,724 L1160,724 L1160,759 L1120,759 Q1140,750 1150,724Z" fill="#7d9678"/>
<path d="M1122,758 Q1140,748 1148,724" stroke="#000" stroke-width="3" fill="none"/>
<!-- trapezoid tiles -->
<polygon points="1162,727 1207,727 1203,764 1170,764" fill="#9ab39a"/>
<ellipse cx="1185" cy="744" rx="10" ry="11" fill="#000"/><rect x="1181" y="736" width="9" height="16" fill="#56937a"/>
<polygon points="1210,727 1258,727 1263,762 1204,764" fill="#7d9678"/>
<circle cx="1220" cy="744" r="8" fill="#000"/><rect x="1217" y="739" width="7" height="9" fill="#8a8f94"/><circle cx="1248" cy="744" r="8" fill="#000"/><rect x="1245" y="739" width="7" height="9" fill="#8fa88c"/>
<path d="M1303.500,722 L1303.500,750 L1266,750 Q1270,736 1290,726Z" fill="#9ab39a"/>
<path d="M1262,728 L1280,724 L1266,740Z" fill="#4c84b8"/>
<rect x="1266" y="752" width="37.500" height="50" fill="#3576a3"/>
<rect x="1275" y="757" width="20" height="27" rx="9" fill="#000"/><rect x="1279" y="762" width="13" height="18" fill="#8a8f94"/>
<path d="M1200,764 L1266,764 L1266,800 Q1250,790 1240,772Z" fill="#4f8096"/>
<polygon points="1176,764 1205,764 1212,768 1190,772" fill="#a08a48"/>
<!-- bands 2 -->
<polygon points="1075,762 1166,762 1172,770 1075,770" fill="#78a2c4"/><polygon points="1086,770 1172,770 1182,777 1078,777" fill="#4c84b8"/><polygon points="1080,777 1182,777 1190,784 1092,784" fill="#3576a3"/>
<!-- tile row -->
<path d="M1076,786 L1132,784 L1132,825 L1096,825 L1094,832 L1080,826Z" fill="#4c84b8"/>
<circle cx="1105" cy="803" r="11" fill="#000"/><rect x="1101" y="796" width="10" height="16" fill="#56935f"/>
<path d="M1132,790 Q1132,783 1140,783 L1192,783 L1192,825 L1132,825Z" fill="#8a8a8a"/>
<circle cx="1163" cy="804" r="11" fill="#000"/><rect x="1159" y="797" width="10" height="18" fill="#6f9156"/>
<path d="M1194,776 L1224,768 L1228,772 L1226,832 L1194,824Z" fill="#7a7c8a"/>
<circle cx="1210" cy="786" r="8" fill="#000"/><rect x="1208" y="780" width="7" height="10" fill="#a08a48"/><circle cx="1210" cy="812" r="8" fill="#000"/><rect x="1205" y="808" width="10" height="8" fill="#56937a"/>
<path d="M1232,786 Q1250,806 1290,808 L1240,820 L1230,816Z" fill="#8a8f94"/>
<rect x="1230" y="774" width="7" height="8" fill="#8fa88c"/>
<polygon points="1303.500,800 1303.500,836 1244,828" fill="#a08a48"/>
<path d="M1228,822 L1240,830 L1228,832Z" fill="#3f7fb0"/>
<!-- stripes 2 -->
<polygon points="1110,826 1196,826 1204,834 1100,834" fill="#56935f"/><polygon points="1116,834 1196,834 1204,840 1104,840" fill="#6f9156"/>
<polygon points="1096,840 1200,840 1194,848 1106,848" fill="#78a2c4"/><polygon points="1104,848 1196,848 1204,854 1112,854" fill="#4c84b8"/><polygon points="1112,854 1200,854 1194,861 1120,861" fill="#4f8b74"/>
<polygon points="1122,863 1196,863 1204,869 1114,869" fill="#8a8f94"/><polygon points="1088,869 1204,869 1196,876 1078,880 1100,872" fill="#56935f"/><polygon points="1090,876 1200,876 1204,883 1086,883" fill="#4f8b74"/>
<polygon points="1075,826 1116,868 1075,868" fill="#2f6f88"/>
<path d="M1076,826 L1096,826 L1094,836 L1082,838Z" fill="#4c84b8"/>
<!-- right mid-lower -->
<rect x="1207" y="834" width="64" height="36" fill="#808792"/>
<polygon points="1272,836 1284,834 1292,864 1280,866" fill="#4f8b74"/>
<path d="M1290,840 L1303,838 L1303,870 L1296,868Z" fill="#8a8f94"/>
<path d="M1202,862 L1264,862 L1258,895 L1210,895Z" fill="#8a8f94"/>
<ellipse cx="1220" cy="882" rx="8" ry="11" fill="#000"/><rect x="1216" y="872" width="8" height="12" fill="#56935f"/><ellipse cx="1247" cy="882" rx="8" ry="11" fill="#000"/><rect x="1243" y="872" width="8" height="12" fill="#6f9156"/>
<rect x="1266" y="872" width="37.500" height="21" fill="#7a7c8a"/>
<!-- bottom zone -->
<rect x="1075" y="884" width="22" height="112" fill="#8fa88c"/><rect x="1075" y="927" width="14" height="5" fill="#000"/>
<polygon points="1106,884 1200,884 1206,890 1100,890" fill="#6a9a78"/><polygon points="1110,890 1196,890 1204,896 1102,896" fill="#8a8f94"/><polygon points="1106,896 1200,896 1206,903 1100,903" fill="#628848"/><polygon points="1110,903 1196,903 1204,910 1102,910" fill="#a08a48"/>
<polygon points="1104,910 1200,910 1206,920 1100,920" fill="#3576a3"/><polygon points="1110,920 1196,920 1204,930 1102,930" fill="#628848"/><polygon points="1104,930 1200,930 1206,938 1100,938" fill="#a08a48"/>
<polygon points="1102,940 1208,940 1206,960 1100,960" fill="#78a2c4"/><rect x="1158" y="947" width="5" height="13" fill="#000"/>
<path d="M1206,898 L1256,898 L1250,940 L1236,938 Q1226,920 1206,898Z" fill="#4f8b74"/>
<path d="M1208,910 Q1226,930 1240,944 L1262,952 L1208,950Z" fill="#3576a3"/>
<path d="M1262,894 L1303.500,894 L1303.500,936 L1262,936 L1262,930 Q1280,920 1290,902 L1262,912Z" fill="#56935f"/>
<path d="M1254,898 Q1256,912 1268,912 L1286,900 L1280,916 Q1260,930 1246,936Z" fill="#4f8096"/>
<rect x="1240" y="940" width="22" height="12" fill="#8ab5d6"/>
<rect x="1262" y="936" width="41.500" height="54" fill="#628848"/>
<rect x="1270" y="937" width="22" height="9" fill="#8fa88c"/><path d="M1270,948 L1292,948 Q1282,956 1270,948Z" fill="#000"/>
<path d="M1300,942 L1296,956 L1264,982" stroke="#000" stroke-width="2.500" fill="none"/>
<path d="M1212,952 L1256,950 Q1262,954 1260,990 L1224,990 Q1214,970 1212,952Z" fill="#4f8b74"/>
<rect x="1232" y="956" width="16" height="28" rx="7" fill="#000"/><rect x="1237" y="962" width="9" height="18" fill="#4f8096"/>
<rect x="1200" y="962" width="12" height="9" fill="#8a8f94"/><rect x="1186" y="962" width="8" height="8" fill="#2f6f98"/>
<path d="M1098,964 L1116,962 L1106,985 L1098,986Z" fill="#4f8096"/>
<path d="M1122,964 L1184,964 Q1176,990 1160,1008 Q1150,1014 1142,1008 Q1130,990 1122,964Z" fill="#56935f"/>
<ellipse cx="1152" cy="982" rx="13" ry="10" fill="#000"/><rect x="1144" y="976" width="14" height="8" fill="#8a8f94"/>
<polygon points="1075,996 1126,985 1154,1040 1075,1067" fill="#4f8096"/>
<path d="M1086,992 L1092,1006 M1118,980 L1124,994" stroke="#000" stroke-width="4"/>
<path d="M1165,1034 Q1176,974 1198,970 Q1216,974 1230,1034Z" fill="#4c84b8"/>
<ellipse cx="1183" cy="1017" rx="9" ry="13" fill="#000"/><path d="M1180,1012 L1190,1012 L1190,1026 L1182,1026Z" fill="#56935f"/><ellipse cx="1212" cy="1017" rx="9" ry="13" fill="#000"/><path d="M1207,1012 L1217,1012 L1214,1026 L1207,1026Z" fill="#8a8f94"/>
<path d="M1226,992 L1303,988 Q1296,1040 1270,1058 Q1250,1062 1240,1044 Q1230,1020 1226,992Z" fill="#4c84b8"/>
<circle cx="1243" cy="1010" r="10" fill="#000"/><rect x="1240" y="1002" width="8" height="15" fill="#8fa88c"/><circle cx="1280" cy="1010" r="10" fill="#000"/><rect x="1277" y="1002" width="8" height="15" fill="#4f8096"/>
<path d="M1303.500,1018 L1303.500,1067 L1262,1067 Q1290,1056 1303.500,1018Z" fill="#4c84b8"/>
<rect x="1146" y="1014" width="14" height="26" fill="#2f6f98"/>
<polygon points="1156,1036 1236,1036 1240,1044 1150,1044" fill="#3576a3"/><polygon points="1140,1046 1244,1046 1250,1053 1128,1053" fill="#8fa88c"/><polygon points="1124,1053 1254,1053 1260,1060 1112,1060" fill="#56935f"/><polygon points="1120,1060 1256,1060 1262,1067 1106,1067" fill="#9ab39a"/>
<rect x="1106" y="1060" width="8" height="7" fill="#2f6f98"/>
</g>
<!--/S5--><!--S6-->
<g id="s6">
<rect x="1318" y="518" width="228" height="549" fill="#000"/>
<polygon points="1318,908 1342,922 1318,926" fill="#8ab5d6"/>
<polygon points="1332,914 1352,913 1354,926 1345,926" fill="#9ab39a"/>
<rect x="1357" y="921" width="49" height="10" fill="#4f8b74"/><rect x="1358" y="931" width="48" height="9" fill="#5a9050"/>
<rect x="1318" y="927" width="8" height="52" fill="#4c84b8"/><rect x="1326" y="937" width="8" height="42" fill="#56935f"/>
<rect x="1327" y="928" width="29" height="8" fill="#8a8f94"/>
<polygon points="1334,938 1370,946 1370,958 1334,948" fill="#8a8f94"/>
<polygon points="1335,950 1372,960 1372,970 1336,962" fill="#56935f"/>
<rect x="1380" y="941" width="38" height="6" fill="#8a8f94"/>
<rect x="1373" y="947" width="42" height="23" fill="#245e7c"/>
<rect x="1404" y="912" width="8" height="8" fill="#8ab5d6"/><rect x="1413" y="912" width="7" height="8" fill="#a08a48"/><rect x="1421" y="912" width="7" height="8" fill="#8a8f94"/><rect x="1429" y="912" width="7" height="8" fill="#8ab5d6"/>
<rect x="1405" y="921" width="42" height="9" fill="#9ab39a"/>
<rect x="1420" y="931" width="37" height="6" fill="#8a8f94"/>
<polygon points="1410,934 1465,944 1465,950 1420,942" fill="#628848"/>
<polygon points="1418,944 1455,952 1452,962 1418,952" fill="#8a8f94"/>
<polygon points="1435,904 1457,914 1456,924 1436,912" fill="#8a8f94"/>
<polygon points="1457,903 1478,912 1478,922 1457,914" fill="#a08a48"/>
<polygon points="1486,908 1498,908 1492,922 1480,922" fill="#628848"/>
<rect x="1497" y="912" width="8" height="8" fill="#3f86b8"/><rect x="1506" y="912" width="6" height="8" fill="#8a8f94"/><rect x="1514" y="914" width="10" height="6" fill="#4c84b8"/><rect x="1525" y="912" width="12" height="8" fill="#8a8f94"/><rect x="1538" y="912" width="8" height="8" fill="#8ab5d6"/>
<polygon points="1458,924 1497,922 1546,922 1546,932 1497,932 1462,930" fill="#56935f"/>
<polygon points="1458,930 1494,940 1494,950 1458,940" fill="#4c84b8"/>
<rect x="1497" y="932" width="49" height="9" fill="#a08a48"/><rect x="1497" y="942" width="49" height="8" fill="#8a8f94"/>
<rect x="1462" y="952" width="42" height="6" fill="#8a8f94"/>
<rect x="1504" y="950" width="42" height="25" fill="#8fa88c"/>
<rect x="1455" y="960" width="49" height="8" fill="#9ab39a"/>
<polygon points="1452,970 1495,970 1505,976 1475,986 1440,980" fill="#a08a48"/>
<polygon points="1437,980 1490,980 1478,988 1437,988" fill="#7d9678"/>
<polygon points="1405,976 1442,966 1442,974 1405,986" fill="#4f8096"/>
<rect x="1418" y="960" width="7" height="7" fill="#8ab5d6"/><rect x="1444" y="963" width="6" height="7" fill="#3f86a8"/>
<polygon points="1367,986 1404,974 1404,984 1367,996" fill="#8ab5d6"/>
<polygon points="1335,996 1367,986 1367,996 1336,1006" fill="#4f8096"/>
<polygon points="1333,984 1370,974 1370,982 1334,994" fill="#9ab39a"/>
<rect x="1373" y="972" width="10" height="6" fill="#56935f"/><rect x="1336" y="968" width="9" height="7" fill="#56935f"/>
<polygon points="1320,982 1330,982 1340,1018 1326,1018" fill="#8ab5d6"/>
<polygon points="1342,1003 1394,992 1394,1022" fill="#8a8a8a"/>
<polygon points="1400,994 1437,984 1437,992 1400,1004" fill="#8a8f94"/>
<polygon points="1410,1002 1462,990 1462,1016" fill="#628848"/>
<polygon points="1394,1006 1447,1022 1394,1034" fill="#a08a48"/>
<path d="M1357,1016 Q1372,1026 1394,1030 L1394,1042 Q1370,1038 1357,1030Z" fill="#a08a48"/>
<polygon points="1408,1036 1460,1024 1460,1050" fill="#628848"/>
<rect x="1466" y="996" width="9" height="6" fill="#56935f"/><rect x="1465" y="1002" width="8" height="6" fill="#4c84b8"/>
<polygon points="1476,994 1510,982 1510,990 1476,1004" fill="#56935f"/>
<polygon points="1473,1004 1510,994 1510,1002 1473,1012" fill="#245e7c"/>
<polygon points="1516,978 1530,978 1520,1010 1508,1010" fill="#245e7c"/>
<polygon points="1532,978 1543,978 1532,1010 1522,1010" fill="#4f8b74"/>
<polygon points="1540,990 1546,985 1546,1060 1540,1060" fill="#8a8f94"/>
<rect x="1500" y="1012" width="40" height="10" fill="#4f8b74"/><rect x="1465" y="1014" width="35" height="9" fill="#4f8096"/>
<rect x="1465" y="1024" width="37" height="34" fill="#245e7c"/><rect x="1502" y="1022" width="38" height="36" fill="#78a2c4"/>
<polygon points="1470,1060 1536,1060 1542,1067 1462,1067" fill="#a08a48"/>
<path d="M1318,1024 Q1320,1020 1326,1020 L1354,1020 L1354,1067 L1318,1067Z" fill="#4f8b74"/>
<path d="M1356,1032 Q1375,1042 1394,1046 L1394,1067 L1356,1067Z" fill="#8a8f94"/>
<path d="M1396,1036 Q1410,1046 1428,1048 L1428,1058 Q1408,1056 1398,1048Z" fill="#9ab39a"/>
<rect x="1428" y="1052" width="37" height="8" fill="#628848"/>
<polygon points="1410,1060 1465,1060 1458,1067 1420,1067" fill="#8a8f94"/>
<rect x="1340" y="1014" width="10" height="6" fill="#4f8096"/>
</g>
<!--/S6-->
</svg>
<div class="t b" style="left:33px;top:521px;font-size:18.500px;color:#f0f0f0">Preview</div>

<div class="t b c" style="left:214px;top:1078px;font-size:19.500px;color:#fff">X1</div>
<div class="t b c" style="left:457px;top:1078px;font-size:19.500px;color:#fff">X1</div>
<div class="t b c" style="left:700px;top:1078px;font-size:19.500px;color:#fff">X1</div>
<div class="t b c" style="left:944px;top:1078px;font-size:19.500px;color:#fff">X1</div>
<div class="t b c" style="left:1187px;top:1078px;font-size:19.500px;color:#fff">X1</div>
<div class="t lbl" style="left:1393px;top:1072px;color:#6cb0ea">Home</div>
<div class="t b c" style="left:1431px;top:1078px;font-size:19.500px;color:#fff">X1</div>
<div class="t lbl" style="left:1456px;top:1072px;letter-spacing:-0.5px">PgUp</div>
<div class="t lbl" style="left:1514px;top:1072px;letter-spacing:-0.3px">PgDn</div>
<div class="t lbl" style="left:1572px;top:1072px;letter-spacing:-0.7px">End</div>
<!-- apply -->
<div class="abs" style="left:1491px;top:1132px;width:133px;height:36px;background:#424242;border:2.300px solid #686868;box-shadow:0 0 0 1px #1a1a1a"></div>
<div class="t lbl c" style="left:1557px;top:1141px;font-size:19px">Apply</div>
</body>
</html>
